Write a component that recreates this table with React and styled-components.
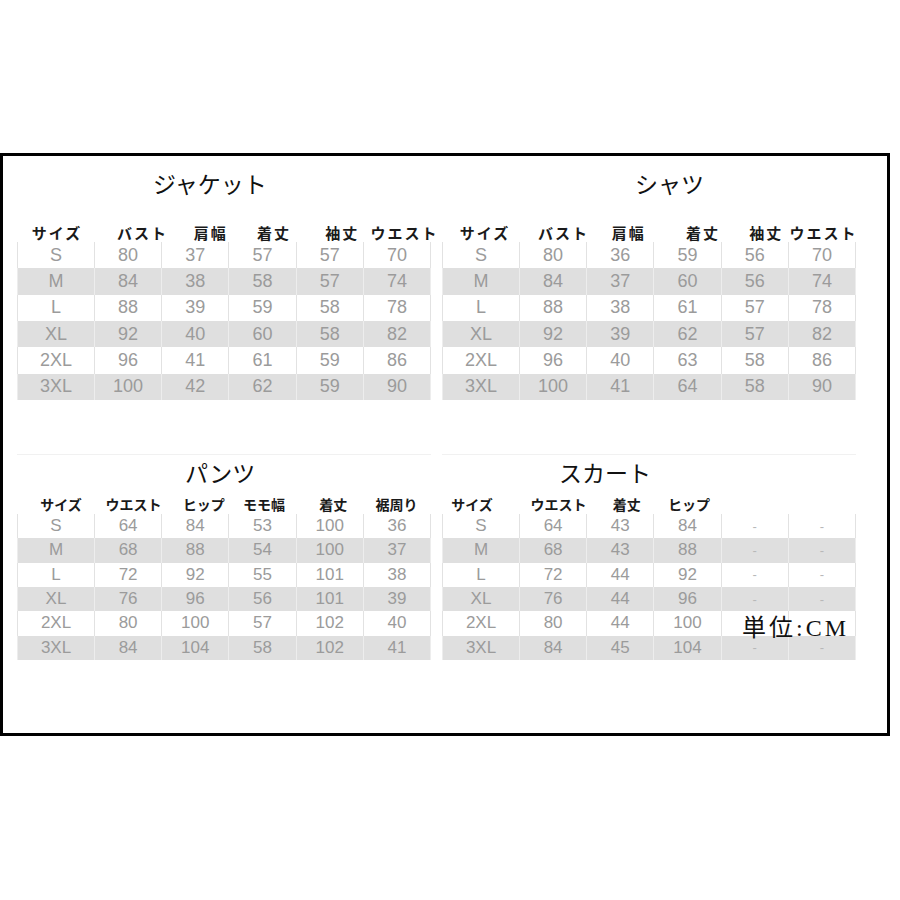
import React from 'react';
import styled, { createGlobalStyle } from 'styled-components';

const GlobalStyle = createGlobalStyle`
  body {
    margin: 0;
    background: #ffffff;
    font-family: "Liberation Sans", "Noto Sans CJK JP", sans-serif;
  }
`;

// Size chart data
const tables = [
  {
    title: 'ジャケット',
    titleLeft: 136,
    headers: [
      ['サイズ', 1], ['バスト', 14], ['肩幅', 15], ['着丈', 11], ['袖丈', 12], ['ウエスト', 7],
    ],
    rows: [
      ['S', '80', '37', '57', '57', '70'],
      ['M', '84', '38', '58', '57', '74'],
      ['L', '88', '39', '59', '58', '78'],
      ['XL', '92', '40', '60', '58', '82'],
      ['2XL', '96', '41', '61', '59', '86'],
      ['3XL', '100', '42', '62', '59', '90'],
    ],
  },
  {
    title: 'シャツ',
    titleLeft: 193,
    headers: [
      ['サイズ', 4], ['バスト', 10], ['肩幅', 8], ['着丈', 15], ['袖丈', 11], ['ウエスト', 1],
    ],
    rows: [
      ['S', '80', '36', '59', '56', '70'],
      ['M', '84', '37', '60', '56', '74'],
      ['L', '88', '38', '61', '57', '78'],
      ['XL', '92', '39', '62', '57', '82'],
      ['2XL', '96', '40', '63', '58', '86'],
      ['3XL', '100', '41', '64', '58', '90'],
    ],
  },
  {
    title: 'パンツ',
    titleLeft: 168,
    headers: [
      ['サイズ', 5], ['ウエスト', 5], ['ヒップ', 8], ['モモ幅', 1], ['着丈', 3], ['裾周り', -1],
    ],
    rows: [
      ['S', '64', '84', '53', '100', '36'],
      ['M', '68', '88', '54', '100', '37'],
      ['L', '72', '92', '55', '101', '38'],
      ['XL', '76', '96', '56', '101', '39'],
      ['2XL', '80', '100', '57', '102', '40'],
      ['3XL', '84', '104', '58', '102', '41'],
    ],
  },
  {
    title: 'スカート',
    titleLeft: 117,
    unit: true,
    headers: [
      ['サイズ', -9], ['ウエスト', 5], ['着丈', 6], ['ヒップ', 1], ['', 0], ['', 0],
    ],
    rows: [
      ['S', '64', '43', '84', '-', '-'],
      ['M', '68', '43', '88', '-', '-'],
      ['L', '72', '44', '92', '-', '-'],
      ['XL', '76', '44', '96', '-', '-'],
      ['2XL', '80', '44', '100', '', ''],
      ['3XL', '84', '45', '104', '-', '-'],
    ],
  },
];

const SizeTable = ({ data, lower }) => (
  <Section $lower={lower}>
    <Title $left={data.titleLeft} $gap={lower ? 8 : 24}>{data.title}</Title>
    <HeadRow $lower={lower}>
      {data.headers.map(([label, dx], i) => (
        <HeadCell key={i}>
          <HeadLabel $dx={dx} $lower={lower}>{label}</HeadLabel>
        </HeadCell>
      ))}
    </HeadRow>
    <Body>
      {data.rows.map((row, r) => (
        <Row key={r} $alt={r % 2 === 1} $h={lower ? 24.33 : 26.33}>
          {row.map((val, c) => (
            <Cell key={c} $alt={r % 2 === 1} $dash={val === '-'} $lower={lower}>
              {val}
            </Cell>
          ))}
        </Row>
      ))}
      {data.unit && <Unit>単位:CM</Unit>}
    </Body>
  </Section>
);

const App = () => (
  <>
    <GlobalStyle />
    <Frame>
      {tables.map((t, i) => (
        <SizeTable key={t.title} data={t} lower={i >= 2} />
      ))}
    </Frame>
  </>
);

const Frame = styled.div`
  box-sizing: border-box;
  width: 890px;
  margin-top: 153px;
  border: 3px solid #000000;
  padding: 12px 31px 73px 14px;
  display: grid;
  grid-template-columns: 414px 414px;
  column-gap: 11px;
`;

const Section = styled.div`
  display: flex;
  flex-direction: column;
  margin-top: ${(p) => (p.$lower ? '54px' : '0')};
  padding-top: ${(p) => (p.$lower ? '2px' : '0')};
  border-top: ${(p) => (p.$lower ? '1px solid #f1f1f1' : 'none')};
`;

const Title = styled.div`
  height: 30px;
  line-height: 30px;
  padding-left: ${(p) => p.$left}px;
  margin-bottom: ${(p) => p.$gap}px;
  font-family: "Noto Sans CJK JP", sans-serif;
  font-size: 23px;
  font-weight: 400;
  color: #111111;
  white-space: nowrap;
`;

const HeadRow = styled.div`
  display: grid;
  grid-template-columns: 78px repeat(5, 1fr);
  height: ${(p) => (p.$lower ? '19px' : '20px')};
  align-items: center;
`;

const HeadCell = styled.div`
  display: flex;
  justify-content: center;
  min-width: 0;
`;

const HeadLabel = styled.span`
  margin-left: ${(p) => p.$dx * 2}px;
  font-family: "Noto Sans CJK JP", sans-serif;
  font-size: ${(p) => (p.$lower ? '14px' : '15px')};
  letter-spacing: ${(p) => (p.$lower ? '0' : '2px')};
  font-weight: 700;
  color: #1a1a1a;
  white-space: nowrap;
  line-height: 1;
`;

const Body = styled.div`
  position: relative;
  display: flex;
  flex-direction: column;
`;

const Row = styled.div`
  display: grid;
  grid-template-columns: 78px repeat(5, 1fr);
  height: ${(p) => p.$h}px;
  background: ${(p) => (p.$alt ? '#dfdfdf' : '#ffffff')};
`;

const Cell = styled.div`
  display: flex;
  align-items: center;
  justify-content: center;
  border-right: 1px solid ${(p) => (p.$alt ? '#ededed' : '#e2e2e2')};
  font-family: "Liberation Sans", Arial, sans-serif;
  font-size: ${(p) => (p.$dash ? '13px' : p.$lower ? '17px' : '18px')};
  color: ${(p) => (p.$dash ? '#b8b8b8' : '#9b9b9b')};

  &:first-child {
    border-left: 1px solid ${(p) => (p.$alt ? '#ededed' : '#e2e2e2')};
  }
`;

const Unit = styled.div`
  position: absolute;
  left: 300px;
  top: 103px;
  font-family: "Liberation Serif", "Noto Sans CJK JP", serif;
  font-size: 24px;
  line-height: 22px;
  letter-spacing: 3px;
  color: #111111;
  white-space: nowrap;
`;

export default App;
